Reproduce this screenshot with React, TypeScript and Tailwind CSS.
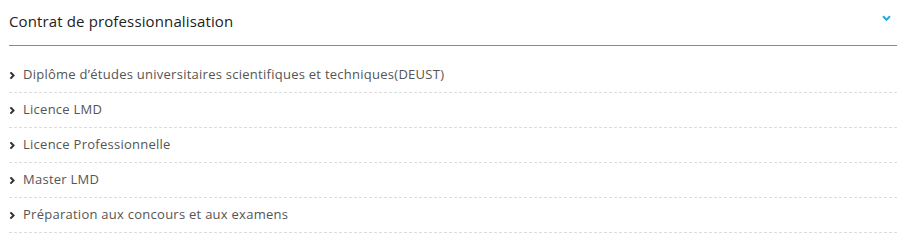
const items = [
  'Diplôme d’études universitaires scientifiques et techniques(DEUST)',
  'Licence LMD',
  'Licence Professionnelle',
  'Master LMD',
  'Préparation aux concours et aux examens',
]

const Chevron = ({ className }: { className?: string }) => (
  <svg viewBox="0 0 10 10" className={className} fill="none" stroke="currentColor" strokeWidth="2.8" strokeLinecap="square">
    <path d="M3 1.5 L6.5 5 L3 8.5" />
  </svg>
)

export default function App() {
  return (
    <div className="w-[917px] h-[248px] bg-white pl-[9px] pr-[20px]" style={{ fontFamily: "'Open Sans', sans-serif" }}>
      <div className="flex items-center justify-between h-[46px] border-b border-[#29abe2]">
        <span className="text-[15px] text-[#222] tracking-[0.13px] pb-[2px]">Contrat de professionnalisation</span>
        <svg viewBox="0 0 10 8" className="w-[9px] h-[7px] mr-[6px] mb-[8px] text-[#29abe2]" fill="none" stroke="currentColor" strokeWidth="2.4">
          <path d="M1 1.5 L5 5.5 L9 1.5" />
        </svg>
      </div>
      <ul className="mt-[12px]">
        {items.map((item) => (
          <li key={item} className="flex items-center gap-[7px] h-[35px] border-b border-dashed border-[#dcdcdc] text-[13px] text-[#555] tracking-[0.26px]">
            <Chevron className="w-[7px] h-[7px] text-[#333]" />
            <span>{item}</span>
          </li>
        ))}
      </ul>
    </div>
  )
}
